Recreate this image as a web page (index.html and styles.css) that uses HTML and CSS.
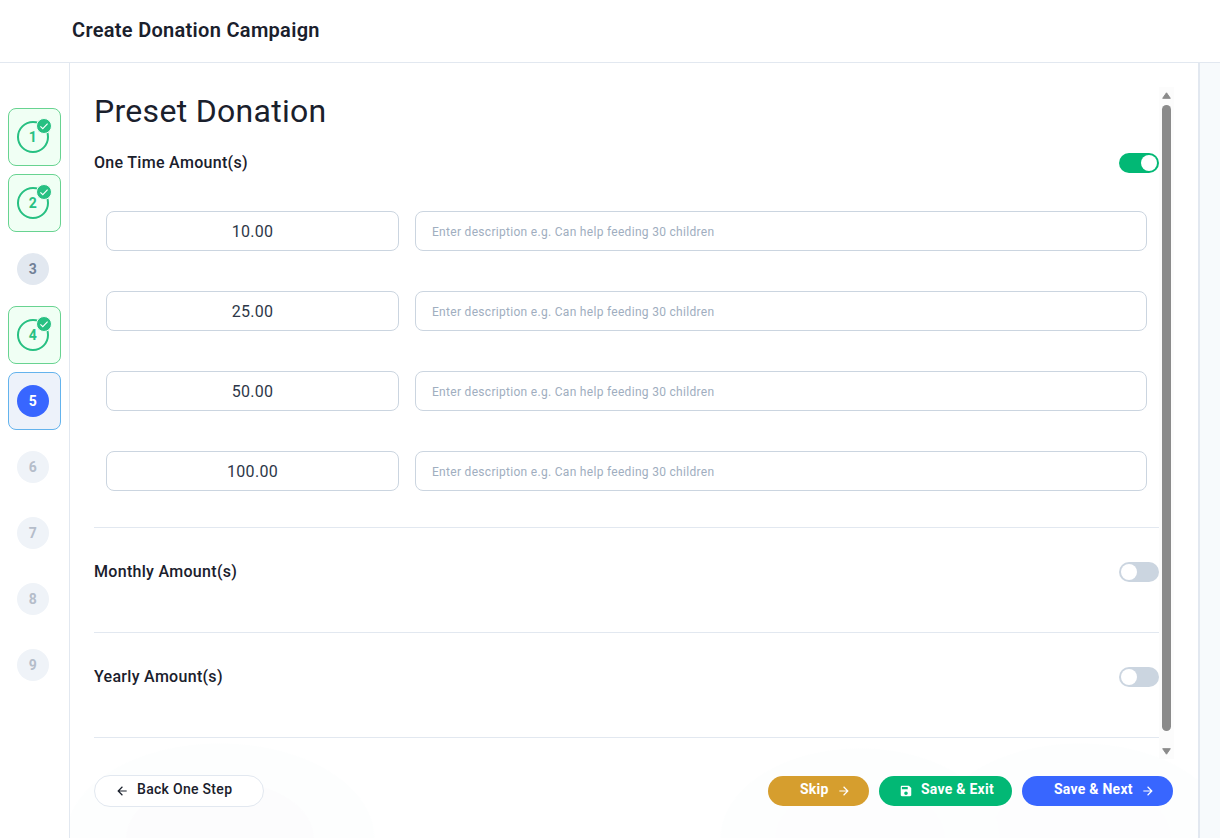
FILE: index.html
```html
<!DOCTYPE html>
<html lang="en">

<head>
    <meta charset="utf-8">
    <title>Create Donation Campaign</title>
    <link rel="stylesheet" href="styles.css">
</head>

<body>

    <svg class="sprite" width="0" height="0">
        <symbol id="check" viewBox="0 0 14 14">
            <path d="M3.4 7.4L5.8 9.7L10.6 4.7" fill="none" stroke="currentColor" stroke-width="1.1"/>
        </symbol>
        <symbol id="arrow-right" viewBox="0 0 24 24">
            <path d="M12 4l-1.41 1.41L16.17 11H4v2h12.17l-5.58 5.59L12 20l8-8z" fill="currentColor"/>
        </symbol>
        <symbol id="arrow-left" viewBox="0 0 24 24">
            <path d="M20 11H7.83l5.59-5.59L12 4l-8 8 8 8 1.41-1.41L7.83 13H20v-2z" fill="currentColor"/>
        </symbol>
        <symbol id="save" viewBox="0 0 24 24">
            <path d="M17 3H5c-1.11 0-2 .9-2 2v14c0 1.1.89 2 2 2h14c1.1 0 2-.9 2-2V7l-4-4zm-5 16c-1.66 0-3-1.34-3-3s1.34-3 3-3 3 1.34 3 3-1.34 3-3 3zm3-10H5V5h10v4z" fill="currentColor"/>
        </symbol>
    </svg>

    <header class="topbar">
        <h1>Create Donation Campaign</h1>
    </header>

    <div class="layout">
        <nav class="steps">
            <div class="step done"><span class="num">1<svg class="badge"><use href="#check"/></svg></span></div>
            <div class="step done"><span class="num">2<svg class="badge"><use href="#check"/></svg></span></div>
            <div class="step visited"><span class="num">3</span></div>
            <div class="step done"><span class="num">4<svg class="badge"><use href="#check"/></svg></span></div>
            <div class="step active"><span class="num">5</span></div>
            <div class="step"><span class="num">6</span></div>
            <div class="step"><span class="num">7</span></div>
            <div class="step"><span class="num">8</span></div>
            <div class="step"><span class="num">9</span></div>
        </nav>

        <main class="main">
            <div class="scroll-area">
                <div class="content">
                    <h2>Preset Donation</h2>

                    <section class="group one-time">
                        <div class="group-head">
                            <h3>One Time Amount(s)</h3>
                            <span class="switch on"></span>
                        </div>
                        <div class="amounts">
                            <input class="amount" type="text" value="10.00">
                            <input class="desc" type="text" placeholder="Enter description e.g. Can help feeding 30 children">
                            <input class="amount" type="text" value="25.00">
                            <input class="desc" type="text" placeholder="Enter description e.g. Can help feeding 30 children">
                            <input class="amount" type="text" value="50.00">
                            <input class="desc" type="text" placeholder="Enter description e.g. Can help feeding 30 children">
                            <input class="amount" type="text" value="100.00">
                            <input class="desc" type="text" placeholder="Enter description e.g. Can help feeding 30 children">
                        </div>
                    </section>

                    <section class="group">
                        <div class="group-head">
                            <h3>Monthly Amount(s)</h3>
                            <span class="switch"></span>
                        </div>
                    </section>

                    <section class="group">
                        <div class="group-head">
                            <h3>Yearly Amount(s)</h3>
                            <span class="switch"></span>
                        </div>
                    </section>
                </div>

                <div class="scrollbar">
                    <svg width="9" height="7" viewBox="0 0 9 7"><path d="M4.5 0.8L8.3 6.3H0.7z" fill="#8b8b8b" stroke="#8b8b8b" stroke-linejoin="round"/></svg>
                    <div class="thumb"></div>
                    <svg width="9" height="7" viewBox="0 0 9 7"><path d="M4.5 6.2L8.3 0.7H0.7z" fill="#8b8b8b" stroke="#8b8b8b" stroke-linejoin="round"/></svg>
                </div>
            </div>

            <footer class="actions">
                <button class="btn back"><svg class="icon"><use href="#arrow-left"/></svg>Back One Step</button>
                <button class="btn skip">Skip<svg class="icon"><use href="#arrow-right"/></svg></button>
                <button class="btn exit"><svg class="icon"><use href="#save"/></svg>Save &amp; Exit</button>
                <button class="btn next">Save &amp; Next<svg class="icon"><use href="#arrow-right"/></svg></button>
            </footer>
        </main>

        <aside class="preview"></aside>
    </div>

</body>

</html>
```
FILE: styles.css
```css
* {
    box-sizing: border-box;
}

body {
    margin: 0;
    height: 838px;
    overflow: hidden;
    display: flex;
    flex-direction: column;
    font-family: Roboto, sans-serif;
    letter-spacing: 0.3px;
    color: #1a202c;
    background: #fff;
}

h1, h2, h3 {
    margin: 0;
}

.sprite {
    position: absolute;
}

.topbar {
    height: 63px;
    padding: 18px 72px 0;
    border-bottom: 1px solid #e2e8f0;
}

.topbar h1 {
    font-size: 20px;
    font-weight: 600;
    line-height: 24px;
}

.layout {
    flex: 1;
    display: flex;
}

/* steps */
.steps {
    width: 70px;
    padding: 45px 8px 0;
    border-right: 1px solid #e2e8f0;
    display: flex;
    flex-direction: column;
    gap: 8px;
}

.step {
    height: 58px;
    padding: 12px 8px;
    border: 1px solid transparent;
    border-radius: 8px;
}

.num {
    position: relative;
    display: flex;
    align-items: center;
    justify-content: center;
    width: 32px;
    height: 32px;
    border-radius: 50%;
    font-size: 14px;
    font-weight: 700;
    color: #b5bdca;
    background: #eff3f8;
}

.visited .num {
    color: #718096;
    background: #e2e8f0;
}

.done {
    background: #f0fff4;
    border-color: #68d391;
}

.done .num {
    color: #27c082;
    background: none;
    border: 2px solid #27c082;
}

.badge {
    position: absolute;
    top: -5px;
    right: -5px;
    width: 16px;
    height: 16px;
    border: 1px solid #f0fff4;
    border-radius: 50%;
    color: #fff;
    background: #27c082;
}

.active {
    background: #edf2fa;
    border-color: #63b3ed;
}

.active .num {
    color: #fff;
    background: #3866ff;
}

/* main column */
.main {
    flex: 1;
    padding: 24px 24px 0;
    background:
        radial-gradient(ellipse 155px 95px at 150px 100%, #fcfcfd 60%, #fdfefe 61%, #fdfefe 99%, transparent),
        radial-gradient(ellipse 140px 90px at 790px 100%, #fdfdfe 60%, #fdfefe 61%, #fdfefe 99%, transparent),
        radial-gradient(ellipse 150px 95px at 1010px 100%, #fdfdfe 60%, #fdfefe 61%, #fdfefe 99%, transparent);
}

.scroll-area {
    display: flex;
    height: 672px;
}

.content {
    flex: 1;
}

.content h2 {
    font-size: 32px;
    font-weight: 400;
    line-height: 48px;
}

.group {
    height: 105px;
    padding-top: 33px;
    border-bottom: 1px solid #e2e8f0;
}

.one-time {
    height: 393px;
    padding-top: 17px;
}

.group-head {
    display: flex;
    justify-content: space-between;
    align-items: center;
    height: 22px;
}

.group-head h3 {
    padding-bottom: 2px;
    font-size: 16px;
    font-weight: 500;
}

.switch {
    width: 40px;
    height: 20px;
    padding: 2px;
    border-radius: 10px;
    background: #cbd5e0;
}

.switch::before {
    content: "";
    display: block;
    width: 16px;
    height: 16px;
    border-radius: 50%;
    background: #fff;
}

.switch.on {
    background: #02b875;
}

.switch.on::before {
    margin-left: auto;
}

.amounts {
    display: grid;
    grid-template-columns: 293px 1fr;
    gap: 40px 16px;
    padding: 37px 12px 0;
}

.amounts input {
    width: 100%;
    height: 40px;
    padding: 0 16px;
    border: 1px solid #cbd5e0;
    border-radius: 8px;
    background: #fff;
    font-family: inherit;
    letter-spacing: inherit;
    color: #2d3748;
}

.amounts .amount {
    font-size: 16px;
    text-align: center;
}

.amounts .desc {
    padding-top: 2px;
    font-size: 12px;
}

.desc::placeholder {
    color: #a0aec0;
}

.scrollbar {
    width: 15px;
    padding: 5px 0 4px;
    display: flex;
    flex-direction: column;
    align-items: center;
    background: #fcfcfc;
}

.thumb {
    flex: 1;
    width: 9px;
    margin: 6px 0 17px;
    border-radius: 5px;
    background: #8b8b8b;
}

/* buttons */
.actions {
    display: flex;
    align-items: center;
    gap: 10px;
    padding: 16px 1px 0 0;
}

.btn {
    display: flex;
    align-items: center;
    height: 30px;
    padding: 0 18px 4px 32px;
    border: none;
    border-radius: 16px;
    font-family: inherit;
    font-size: 14px;
    font-weight: 700;
    letter-spacing: 0.25px;
    color: #fff;
    white-space: nowrap;
}

.icon {
    width: 14px;
    height: 14px;
    margin-top: 4px;
}

.back {
    width: 170px;
    height: 32px;
    margin-right: auto;
    padding-left: 20px;
    border: 1px solid #e2e8f0;
    font-weight: 500;
    letter-spacing: 0.3px;
    color: #1a202c;
    background: #fff;
}

.skip {
    width: 101px;
    background: #d69e2e;
}

.exit {
    width: 133px;
    padding-left: 20px;
    background: #02b875;
}

.next {
    width: 151px;
    background: #3866ff;
}

.back .icon,
.exit .icon {
    margin-right: 8px;
}

.skip .icon,
.next .icon {
    margin-left: 8px;
}

.preview {
    width: 22px;
    border-left: 2px solid #e2e8f0;
    background: #f7fafc;
}
```
